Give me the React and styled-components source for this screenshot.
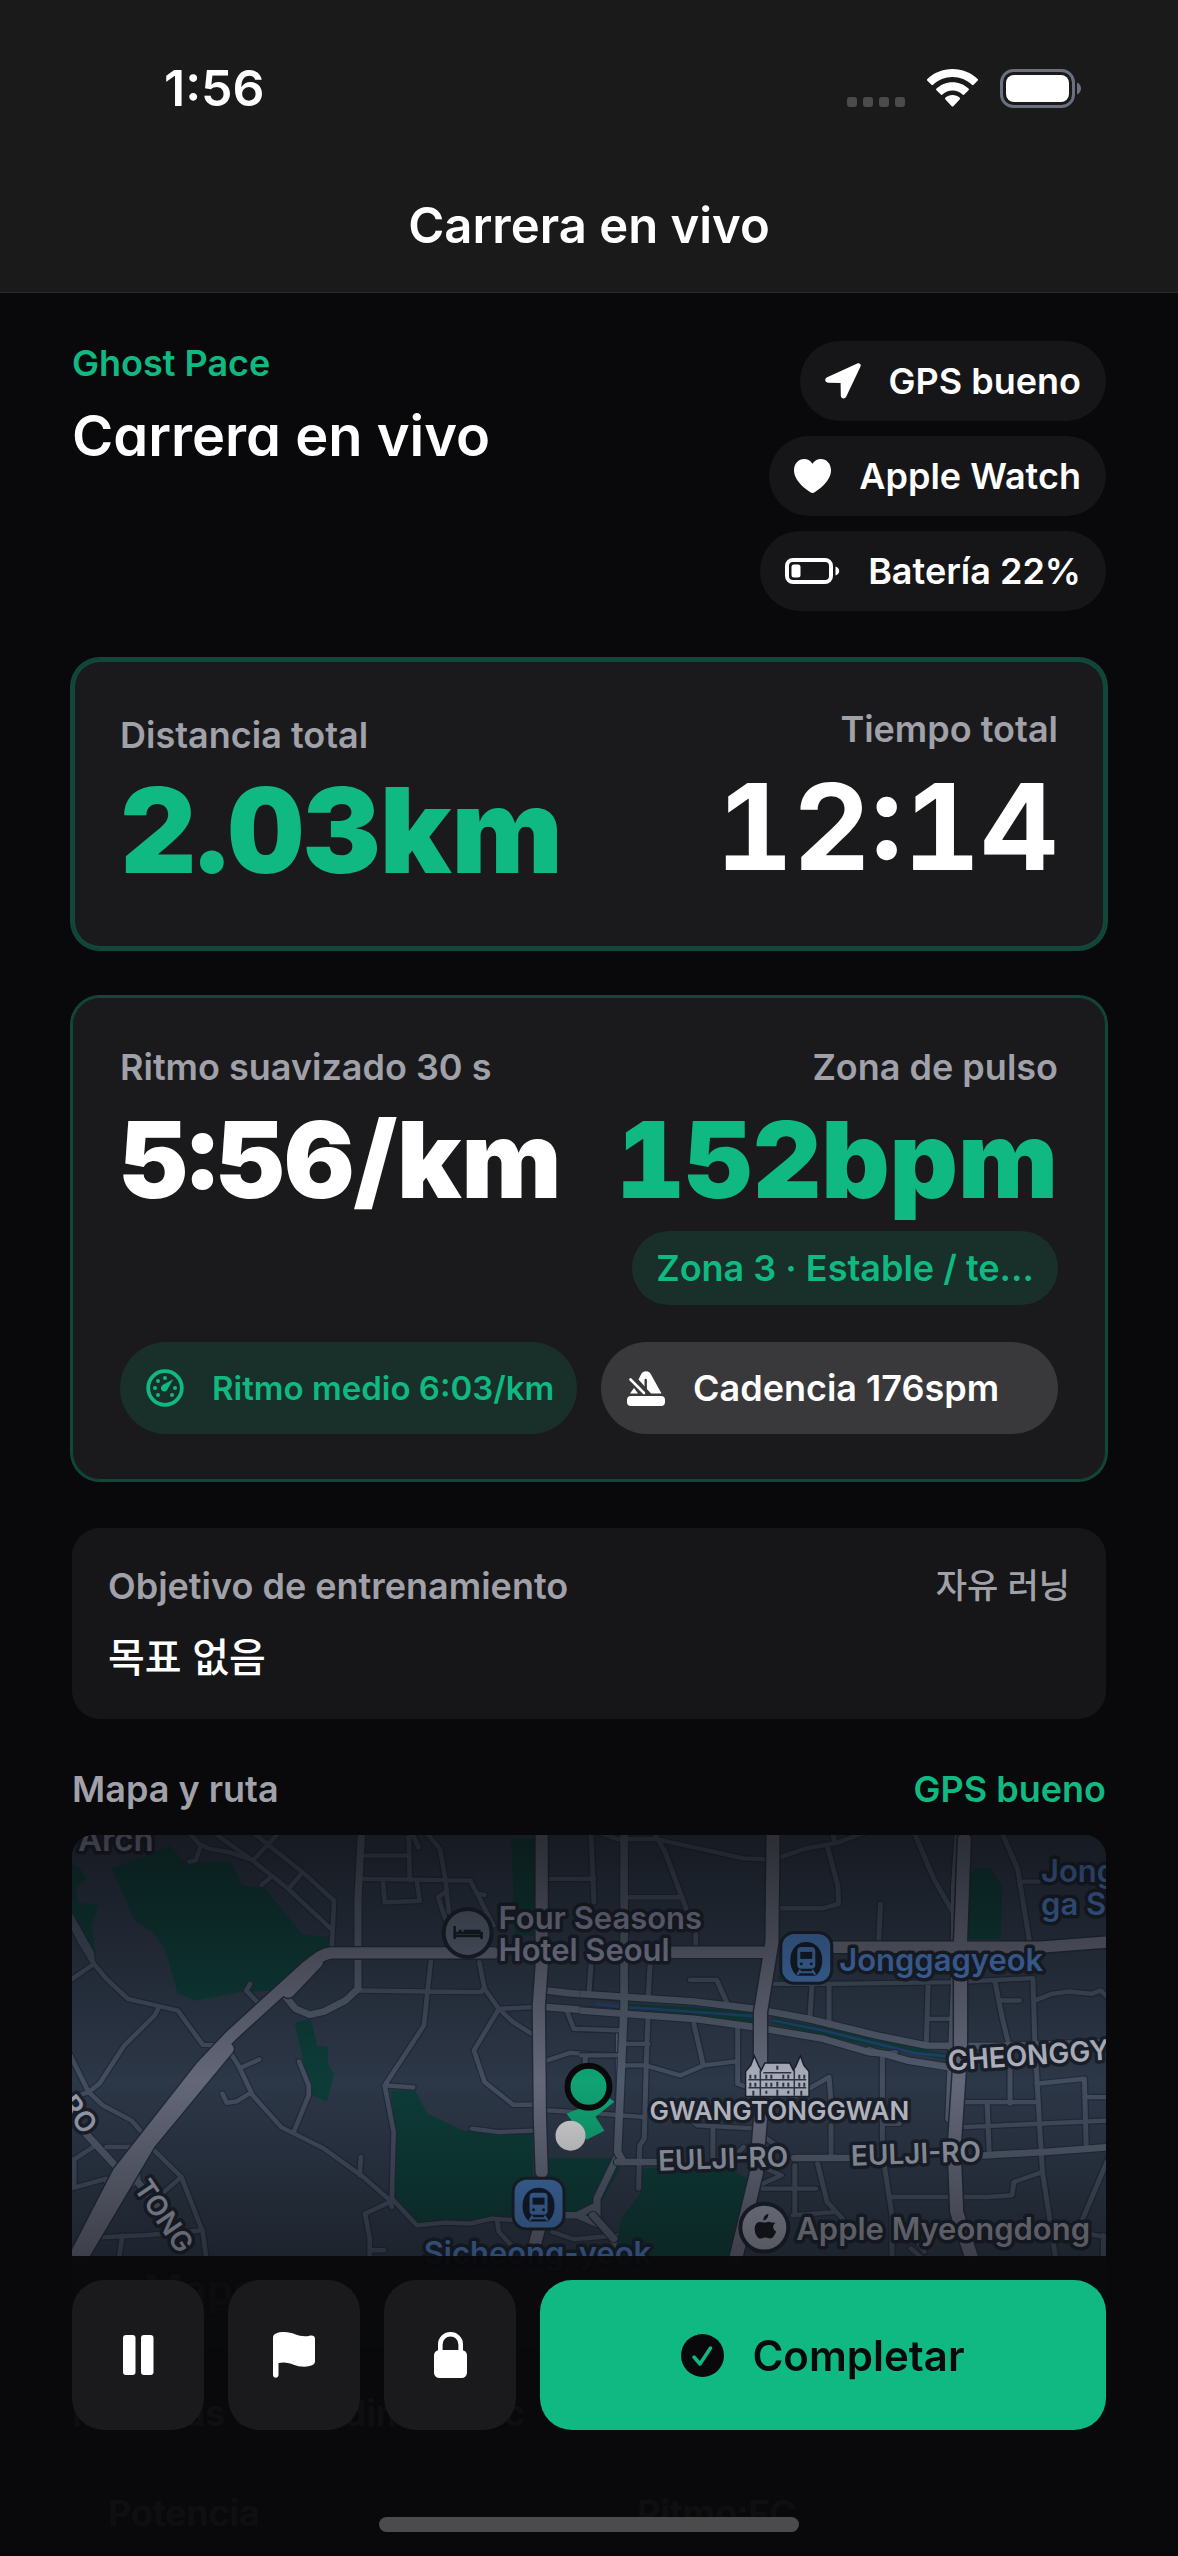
import React from 'react';
import styled, { createGlobalStyle, css } from 'styled-components';

const green = '#10b981';
const sans = "Inter, 'Noto Sans CJK KR', sans-serif";

const GlobalStyle = createGlobalStyle`
  * { box-sizing: border-box; }
  body { margin: 0; background: #09090b; color: #fff; font-family: ${sans}; -webkit-font-smoothing: antialiased; }
  h1, h2, p { margin: 0; font-weight: inherit; }
  svg { display: block; flex: none; }
`;

const Screen = styled.div`
  height: 100vh;
  display: flex;
  flex-direction: column;
  overflow: hidden;
`;

const TopBar = styled.header`
  flex: none;
  background: #1a1a1a;
  border-bottom: 1px solid #2b2b2c;
  padding: 56px 0 36px;
`;

const StatusBar = styled.div`
  display: flex;
  align-items: center;
  justify-content: space-between;
  height: 64px;
  padding: 0 96px 0 164px;
`;

const Clock = styled.time`
  font-size: 50px;
  line-height: 64px;
  font-weight: 600;
`;

const StatusIcons = styled.div`
  display: flex;
  align-items: center;
  gap: 22px;
`;

const BarTitle = styled.h1`
  margin-top: 76px;
  font-size: 49px;
  line-height: 60px;
  font-weight: 600;
  text-align: center;
`;

const Content = styled.main`
  flex: 1;
  min-height: 0;
  overflow-y: auto;
  scrollbar-width: none;
  padding: 48px 72px 320px;
  display: flex;
  flex-direction: column;
`;

const Intro = styled.section`
  display: flex;
  justify-content: space-between;
  margin-bottom: 48px;
`;

const Brand = styled.p`
  font-size: 36px;
  line-height: 44px;
  font-weight: 600;
  color: ${green};
`;

const Heading = styled.h2`
  margin-top: 13px;
  font-size: 56px;
  line-height: 76px;
  font-weight: 600;
  font-feature-settings: 'cv11', 'ss03';
`;

const Badges = styled.div`
  display: flex;
  flex-direction: column;
  align-items: flex-end;
  gap: 15px;
`;

const Badge = styled.div`
  display: flex;
  align-items: center;
  gap: 28px;
  height: 80px;
  padding: 0 25px;
  border-radius: 40px;
  background: #161618;
  font-size: 36px;
  line-height: 44px;
  font-weight: 600;
`;

const StatCard = styled.section`
  padding: 48px 48px 46px;
  border-radius: 28px;
  background: #1a1a1c;
  box-shadow: 0 0 0 2px #11483b, inset 0 0 0 ${(p) => (p.$strong ? 3 : 1)}px #11483b;
  margin-bottom: 48px;
`;

const Row = styled.div`
  display: flex;
  justify-content: space-between;
  align-items: ${(p) => p.$align || 'flex-start'};
`;

const Stat = styled.div`
  display: flex;
  flex-direction: column;
  align-items: ${(p) => (p.$end ? 'flex-end' : 'flex-start')};
`;

const Label = styled.p`
  font-size: 36px;
  line-height: 44px;
  font-weight: 600;
  color: ${(p) => (p.$accent ? green : '#a1a1aa')};
`;

const GoalType = styled(Label)`
  font-size: 34px;
  font-weight: 500;
`;

const Value = styled.p`
  font-size: ${(p) => p.$size}px;
  line-height: ${(p) => p.$line}px;
  font-weight: ${(p) => p.$weight || 900};
  font-variant-numeric: tabular-nums;
  color: ${(p) => (p.$accent ? green : '#fff')};
`;

const ZoneChip = styled.p`
  padding: 15px 24px;
  border-radius: 37px;
  background: #182f2a;
  color: ${green};
  font-size: 36px;
  line-height: 44px;
  font-weight: 600;
  white-space: nowrap;
`;

const PillRow = styled.div`
  display: grid;
  grid-template-columns: repeat(2, minmax(0, 1fr));
  gap: 24px;
  margin-top: 37px;
`;

const Pill = styled.div`
  display: flex;
  align-items: center;
  gap: 28px;
  height: 92px;
  padding: 0 26px;
  border-radius: 46px;
  white-space: nowrap;
  font-weight: 600;
  ${(p) =>
    p.$accent
      ? css`background: #182f2a; color: ${green}; font-size: 33px;`
      : css`background: #39393b; color: #fff; font-size: 36px;`}
`;

const GoalCard = styled.section`
  padding: 36px;
  border-radius: 28px;
  background: #161618;
  margin-bottom: 48px;
`;

const Goal = styled.p`
  margin-top: 25px;
  font-size: 40px;
  line-height: 50px;
  font-weight: 500;
`;

const MapFrame = styled.div`
  margin: 24px 0 43px;
  border-radius: 22px;
  overflow: hidden;
  flex: none;
  svg { width: 100%; height: auto; }
  text { font-family: ${sans}; }
`;

const Metrics = styled.section`
  display: grid;
  grid-template-columns: repeat(2, minmax(0, 1fr));
  gap: 24px;
  margin-top: 20px;
`;

const MetricCard = styled.div`
  padding: 36px;
  border-radius: 28px;
  background: #161618;
`;

const Dock = styled.footer`
  position: fixed;
  left: 0;
  right: 0;
  bottom: 0;
  height: 300px;
  padding: 24px 72px;
  background: rgba(9, 9, 11, 0.96);
  display: flex;
  flex-direction: column;
  align-items: center;
  justify-content: space-between;
`;

const Controls = styled.div`
  display: flex;
  gap: 24px;
  width: 100%;
`;

const Control = styled.button`
  flex: ${(p) => (p.$primary ? '1' : '0 0 132px')};
  display: flex;
  align-items: center;
  justify-content: center;
  gap: 28px;
  height: 150px;
  padding: 0;
  border: 0;
  border-radius: 32px;
  background: ${(p) => (p.$primary ? green : '#1a1a1c')};
  color: ${(p) => (p.$primary ? '#09090b' : '#fff')};
  font-family: inherit;
  font-size: 42px;
  font-weight: 600;
`;

const HomeIndicator = styled.div`
  width: 420px;
  height: 15px;
  border-radius: 8px;
  background: #4a4b4a;
`;

const CellDots = () => (
  <svg width="58" height="38" viewBox="0 0 58 38" fill="#4b4b4b">
    {[0, 16, 32, 48].map((x) => <rect key={x} x={x} y="28" width="10" height="10" rx="3" />)}
  </svg>
);

const Wifi = () => (
  <svg width="51" height="38" viewBox="0 0 51 38" fill="#fff">
    <path d="M25.500 0C15.700 0 6.800 3.800.4 10a1.200 1.200 0 0 0 0 1.800l4 4c.5.500 1.200.500 1.700 0C11.100 11 18 8 25.500 8s14.400 3 19.400 7.800c.5.500 1.200.500 1.700 0l4-4a1.200 1.200 0 0 0 0-1.800C44.200 3.800 35.300 0 25.500 0z" />
    <path d="M25.500 13.200c-6.200 0-11.800 2.400-16 6.300a1.200 1.200 0 0 0 0 1.800l4.300 4.200c.5.500 1.200.500 1.700 0a14.500 14.500 0 0 1 20 0c.5.500 1.200.500 1.700 0l4.300-4.200a1.200 1.200 0 0 0 0-1.800c-4.200-3.900-9.800-6.300-16-6.300z" />
    <path d="M25.500 26c-2.700 0-5.200 1-7 2.600a1.200 1.200 0 0 0 0 1.800l6.200 6.800c.5.500 1.200.500 1.700 0l6.200-6.800a1.200 1.200 0 0 0 0-1.800c-1.900-1.600-4.400-2.600-7.100-2.600z" />
  </svg>
);

const PhoneBattery = () => (
  <svg width="82" height="39" viewBox="0 0 82 39">
    <rect x="1.500" y="1.500" width="72" height="36" rx="12" fill="none" stroke="#6b7080" strokeWidth="3" />
    <rect x="6" y="6" width="63" height="27" rx="8" fill="#fff" />
    <path d="M77 13.500c2.600 1 4 3.400 4 6s-1.400 5-4 6z" fill="#6b7080" />
  </svg>
);

const Arrow = () => (
  <svg width="36" height="36" viewBox="0 0 36 36" fill="#fff">
    <path d="M32.300.4 2.200 14.200C-.7 15.600-.3 19.600 3 19.700l12.600.2.200 12.700c.1 3.300 4.100 4 5.500 1L35.500 3.500C36.400 1.300 34.500-.6 32.300.4z" />
  </svg>
);

const Heart = () => (
  <svg width="37" height="34" viewBox="0 0 37 34" fill="#fff">
    <path d="M18.500 34c-.8 0-1.700-.5-2.500-1C6 26.500 0 19 0 11.300 0 4.700 4.500 0 10.200 0c3.500 0 6.500 1.800 8.300 4.800C20.300 1.800 23.300 0 26.800 0 32.500 0 37 4.700 37 11.300 37 19 31 26.500 21 33c-.8.500-1.700 1-2.500 1z" />
  </svg>
);

const LowBattery = () => (
  <svg width="55" height="26" viewBox="0 0 55 26">
    <rect x="2" y="2" width="44" height="22" rx="6" fill="none" stroke="#fff" strokeWidth="4" />
    <rect x="6.500" y="6.500" width="9" height="13" rx="2.500" fill="#fff" />
    <path d="M50.500 8.500c2.300.7 3.700 2.400 3.700 4.500s-1.400 3.800-3.700 4.500z" fill="#fff" />
  </svg>
);

const Gauge = () => (
  <svg width="38" height="38" viewBox="0 0 38 38">
    <circle cx="19" cy="19" r="16.800" fill="none" stroke={green} strokeWidth="3.800" />
    <g fill={green}>
      <path d="M27.300 10.300 17 15.800c-2.600 1.800-2.400 4.600-.9 6 1.500 1.300 4 1.200 5.300-1.300z" />
      <circle cx="19" cy="9" r="2" /><circle cx="12" cy="12" r="2" />
      <circle cx="9" cy="19" r="2" /><circle cx="29" cy="19" r="2" />
      <circle cx="12" cy="26" r="2" /><circle cx="26" cy="26" r="2" />
    </g>
  </svg>
);

const Metronome = () => (
  <svg width="38" height="35" viewBox="0 0 38 35" fill="#fff">
    <rect x="0" y="25" width="38" height="10" rx="4" />
    <path d="M7 17 3 22.500h8z" />
    <path d="M11.500 8.500 14 3.500C16-.9 22-.9 24 3.500L34.500 22.500H24z" />
    <path d="M3.500 8.500 17 22" stroke="#fff" strokeWidth="2.600" strokeLinecap="round" />
    <path d="M18.700 9v9" stroke="#39393b" strokeWidth="2.400" strokeLinecap="round" />
  </svg>
);

const Pause = () => (
  <svg width="31" height="40" viewBox="0 0 31 40" fill="#fff">
    <rect width="12.500" height="40" rx="3" /><rect x="18" width="12.500" height="40" rx="3" />
  </svg>
);

const Flag = () => (
  <svg width="42" height="46" viewBox="0 0 42 46" fill="#fff">
    <path d="M0 6c0-2.200.8-3.500 3-4.500C5.400.4 7.800 0 11 0c9 0 13.500 4.300 21 4.300 3 0 4.700-.8 6.500-.8 2 0 3.500 1.200 3.500 3.400V29c0 2.200-.8 3.300-3 4.300-2.200.9-4.500 1.400-7.500 1.400-8.700 0-13.300-4.300-21-4.300-2 0-3.600.2-5 .7V43c0 3.500-5.500 3.500-5.500 0z" />
  </svg>
);

const Lock = () => (
  <svg width="33" height="46" viewBox="0 0 33 46">
    <rect y="18" width="33" height="28" rx="5.500" fill="#fff" />
    <path d="M6.300 20v-7.500C6.300 6.500 11 2.300 16.500 2.300s10.200 4.200 10.200 10.200V20" fill="none" stroke="#fff" strokeWidth="4.600" />
  </svg>
);

const CheckCircle = () => (
  <svg width="43" height="43" viewBox="0 0 43 43">
    <circle cx="21.500" cy="21.500" r="21.500" fill="#09090b" />
    <path d="m13 23 6 7 10.500-16" fill="none" stroke={green} strokeWidth="3.500" strokeLinecap="round" strokeLinejoin="round" />
  </svg>
);

/* Street geometry, digitised on two overlapping sheets: west and east. */
const WEST = {
  parks: [
    'M145 150 310 80 345 130 480 130 510 200 570 205 680 345 755 355 755 380 720 400 600 515 500 520 380 545 330 525 295 395 265 345 205 300 180 230z',
    'M0 130 50 140 75 180 45 205 50 250 108 260 88 320 100 400 90 400 35 310 0 300z',
    'M1265 60H1335V350H1275z',
    'M658 612 703 600 720 680 750 685 752 740 768 765 748 848 705 830 682 725z',
    'M927 815H995L1030 885 1130 935 1240 945H1325V1075H1530L1520 1130 1480 1170 1350 1200 1200 1195 1100 1215 995 1215 940 1140 940 930z',
    'M1365 1018H1568V1050L1510 1165H1365z',
  ],
  minor: [
    'M360 40 390 75 420 90 475 100 530 120M395 80 380 125 362 128',
    'M430 40 540 125 640 210 760 330M540 125 610 45M540 40 680 160 768 245 762 380M680 160 640 210M590 175 565 198',
    'M845 110H970M978 60 980 185M845 180 1000 182 1150 185 1215 320M905 185 910 250 1008 246 1000 185M975 55 990 50 1005 85M1030 45 1065 90 1080 180 1090 280M1085 215 1060 235 1080 300M1190 228 1175 225',
    'M1365 180H1490M1488 40 1497 250M1490 440 1485 520',
    'M0 250 60 375 95 435 130 480 190 540 270 560 330 575 400 678 450 680M95 435 0 505M92 430 88 400 30 290',
    'M275 570 265 590 180 680 110 795 80 820 50 832M20 690 80 820 120 860 200 905 245 960',
    'M555 552 522 515 533 495M470 690 500 740 540 830 620 925 740 990 850 1075 925 1145 930 1165M510 745 558 722M530 825 495 848 467 852 455 825M670 728 697 800 697 830 655 940M843 1015 840 1070',
    'M838 515 1030 518 1180 520 1190 505M1040 420 1030 518 1020 620 910 800 935 940 930 1140M910 800 990 806M1175 430 1190 510 1230 570 1270 610 1330 650M1230 570 1160 695 1190 790 1270 858H1325M1230 570 1325 565M1155 930 1230 940 1325 936',
    'M930 1140 1000 1220 1080 1212 1150 1215 1210 1200 1280 1205M925 1150 855 1185 868 1260 868 1320M868 1295H908M1225 1205 1230 1240 1265 1280M1380 1240 1440 1262 1568 1250',
    'M240 970 340 1075 400 1240 410 1320M340 1075 275 1135M0 1050 100 980M30 1110 130 1080M40 1020V1100M130 985H210L220 1080 180 1120 130 1090M80 1258 240 1250 400 1235M175 1250 165 1320',
    'M1365 725 1430 702 1568 712M1470 705V740M1420 575 1440 630 1568 635M1365 875 1568 888',
  ],
  medium: [
    'M845 40 835 240 835 510 800 545 740 578 700 588 660 570 630 530',
    'M1365 515 1420 522 1568 535M1365 565 1568 582',
    'M60 930 180 1070M180 1040 330 1240',
    'M1568 640 1568 1000 1550 1040 1505 1140 1505 1200 1568 1290M1365 1190H1450L1505 1160M1450 1190 1505 1215',
  ],
  major: [
    'M1215 402H760C735 405 720 420 690 445L480 650 400 740 165 1060 35 1330M720 430 640 520M470 690 250 975 60 1320',
    'M1350 40V440L1342 560 1345 900 1350 1060M1350 1200 1320 1320',
  ],
};

const EAST = {
  parks: [
    'M1018 180 1040 148H1080L1110 200 1105 360H1020z',
    'M120 555 300 565 460 580V610L300 590 125 570z',
    'M505 595 640 625 800 668 960 705V722L800 690 640 650 505 615z',
    'M165 1048H390L440 1080 400 1320H90L110 1200 165 1115z',
    'M520 470H560V485H520z',
  ],
  water: ['M45 555 120 565 250 575 455 592', 'M508 605 640 635 800 680 880 703 960 712'],
  minor: [
    'M30 40 38 250M0 180H38M117 235H265M195 40 225 100 280 270M305 345V375M515 268H640L680 255 678 200 650 80M500 125 590 90 680 70 750 40M665 45 670 70M785 372 790 255M880 45 930 180 985 290M1110 45 1150 150 1180 360M1155 188H1205',
    'M60 45 100 60H200L320 90 430 118 505 122',
    'M30 440 25 520M185 440 180 540M290 483H360L390 560M117 675H180M180 590 175 740 170 960 158 980 155 1110M300 615 325 740M117 740H175L265 770 325 740 410 728M415 625V795L440 805M510 495H660M610 500 605 590M655 495V620M660 495 985 490M915 500 910 675M915 600H975M985 490 1190 478 1195 670 1208 930 1215 1060 1250 1320M1090 485 1110 600 1125 670M1105 545H1155M1195 545 1240 525 1285 518 1345 525 1368 515 1395 545',
    'M0 630 115 635M795 710 795 970M795 705 760 690M795 705 830 700M540 850 655 775 660 850M660 920V1010M350 930V1020M290 900 310 920 470 930M0 710H110M15 710V740M0 880 170 895M480 950 540 1000M800 915H840',
    'M1130 690V855M1010 850H1195M1070 855 1075 995M1010 925 1205 915 1395 905M1200 795 1325 780 1330 990M1325 835H1395',
    'M625 1035 650 1150 690 1200 700 1250M480 1110H620M565 1040V1190M560 1190 670 1180M800 1040 820 1190 820 1320M820 1135H1070L1135 1130 1140 1090 1215 1060M1395 1000 1310 1230M1310 1240 1400 1260M1375 1250V1320M870 1290 900 1320M905 1300 890 1275',
    'M430 985 410 1010 530 1070 470 1100',
  ],
  medium: [
    'M117 40 117 560 100 1000 115 1030M35 1190 90 1260',
    'M0 525 300 548 460 570 600 600 780 650 910 680 1100 682 1395 670M0 575 300 600 460 625 640 660 760 700 800 705 860 725 970 745',
    'M100 1030H200M565 1018H705M1060 1010 1220 1000 1395 985',
    'M995 40 985 200 985 490 970 900',
  ],
  major: [
    'M508 40 505 370 475 580 475 740M475 900 470 970M465 1060 410 1320',
    'M245 400H500M670 385H1210L1400 368',
    'M1010 60 1000 370 1000 700 985 960M985 1040 990 1180 1030 1320',
  ],
};

const Sheet = ({ data, transform }) => (
  <g transform={transform}>
    {data.parks.map((d) => <path key={d} d={d} fill="#0d3c38" />)}
    <g fill="none" strokeLinejoin="round" strokeLinecap="round">
      {(data.water || []).map((d) => <path key={d} d={d} stroke="#22406e" strokeWidth="8" />)}
      <g stroke="#222b39" strokeWidth="20">{data.minor.map((d) => <path key={d} d={d} />)}</g>
      <g stroke="#222b39" strokeWidth="26">{data.medium.map((d) => <path key={d} d={d} />)}</g>
      <g stroke="#434d5f" strokeWidth="13">{data.minor.map((d) => <path key={d} d={d} />)}</g>
      <g stroke="#515a6b" strokeWidth="20">{data.medium.map((d) => <path key={d} d={d} />)}</g>
      <g stroke="#222b39" strokeWidth="42">{data.major.map((d) => <path key={d} d={d} />)}</g>
      <g stroke="#636778" strokeWidth="34">{data.major.map((d) => <path key={d} d={d} />)}</g>
    </g>
  </g>
);

const Station = ({ x, y }) => (
  <g transform={`translate(${x} ${y})`}>
    <rect x="-3" y="-3" width="54" height="54" rx="15" fill="#1a202b" />
    <rect width="48" height="48" rx="12" fill="#4170ad" />
    <path d="M8 26C8 2 40 2 40 26c0 8-3 13-7 16H15c-4-3-7-8-7-16z" fill="#131b2a" />
    <rect x="15" y="13" width="18" height="22" rx="4" fill="#4170ad" />
    <rect x="18" y="18" width="12" height="7" fill="#131b2a" />
    <circle cx="19" cy="30" r="1.500" fill="#131b2a" /><circle cx="29" cy="30" r="1.500" fill="#131b2a" />
    <path d="m18 36-3 5M30 36l3 5M17 38.500h14" stroke="#4170ad" strokeWidth="2" />
  </g>
);

const MapLabel = ({ x, y, size = 31, fill = '#8688a0', turn = 0, weight = 600, children }) => (
  <text
    transform={`translate(${x} ${y}) rotate(${turn})`}
    fontSize={size}
    fontWeight={weight}
    fill={fill}
    stroke="#1a202b"
    strokeWidth="7"
    strokeLinejoin="round"
    paintOrder="stroke"
  >
    {children}
  </text>
);

const Hall = () => (
  <g transform="translate(675 223)">
    <path d="M0 38V14L5 8 8 0l4 9 3 5 4-8h24l4 8 3-5 4-9 3 8 5 6v24z" fill="#a9adba" stroke="#1a202b" strokeWidth="3" paintOrder="stroke" />
    <path d="M17 15h28M2 22h58M2 30h58M14 12v26M48 12v26" stroke="#2b3444" strokeWidth="1.500" />
    <path d="M4 17v4M9 17v4M20 17v4M25 17v4M31 8v4M37 17v4M42 17v4M53 17v4M58 17v4M4 25v4M9 25v4M20 25v4M25 25v4M31 24v5M37 25v4M42 25v4M53 25v4M58 25v4M7 33v5M20 33v3M31 32v6M42 33v3M55 33v5" stroke="#2b3444" strokeWidth="2" />
  </g>
);

const RouteMap = () => (
  <svg viewBox="0 0 1035 513" role="img" aria-label="Mapa y ruta">
    <defs>
      <linearGradient id="shade" x1="0" y1="0" x2="0" y2="1">
        <stop offset="0" stopColor="#09090b" stopOpacity="0.62" />
        <stop offset="0.48" stopColor="#09090b" stopOpacity="0" />
        <stop offset="1" stopColor="#09090b" stopOpacity="0.64" />
      </linearGradient>
      <clipPath id="westHalf"><rect width="548" height="513" /></clipPath>
      <clipPath id="eastHalf"><rect x="508" width="527" height="513" /></clipPath>
    </defs>
    <rect width="1035" height="513" fill="#2c3747" />
    <g clipPath="url(#westHalf)"><Sheet data={WEST} transform="translate(-12 -16) scale(0.35714 0.33333)" /></g>
    <g clipPath="url(#eastHalf)"><Sheet data={EAST} transform="translate(508 -16) scale(0.38139 0.33333)" /></g>
    <MapLabel x={6} y={16} size={33}>Arch</MapLabel>
    <circle cx="396" cy="98" r="24" fill="#596275" stroke="#1a202b" strokeWidth="4" />
    <path d="M383 91v13M383 101h27M410 104v-6h-27M387 96h3M392 96h17" stroke="#161b24" strokeWidth="2.500" fill="none" />
    <MapLabel x={427} y={94}>Four Seasons</MapLabel>
    <MapLabel x={427} y={126}>Hotel Seoul</MapLabel>
    <Station x={711} y={99} />
    <MapLabel x={768} y={136} fill="#4978bc">Jonggagyeok</MapLabel>
    <MapLabel x={970} y={47} fill="#4978bc">Jong</MapLabel>
    <MapLabel x={970} y={80} fill="#4978bc">ga S</MapLabel>
    <MapLabel x={877} y={236} size={28} fill="#b4b7c3" turn={-4}>CHEONGGY</MapLabel>
    <MapLabel x={587} y={336} size={28} fill="#9aa0af" turn={-2}>EULJI-RO</MapLabel>
    <MapLabel x={780} y={331} size={28} fill="#9aa0af" turn={-2}>EULJI-RO</MapLabel>
    <MapLabel x={61} y={353} size={28} fill="#9aa0af" turn={56}>TONG</MapLabel>
    <MapLabel x={-13} y={270} size={28} fill="#9aa0af" turn={52}>RO</MapLabel>
    <Hall />
    <MapLabel x={578} y={285} size={26} fill="#bcbfca">GWANGTONGGWAN</MapLabel>
    <circle cx="693" cy="393" r="24" fill="#8b8f9d" stroke="#1a202b" strokeWidth="4" />
    <path d="M700 388c-3-2-5 0-7 0s-5-2-8 1c-4 5 0 15 4 15 2 0 3-1 5-1s3 1 5 1c3 0 5-5 6-7-4-2-4-7-1-8-1-1-2-1-4-1zM692 386c0-4 2-6 5-7 0 4-2 6-5 7z" fill="#14171e" />
    <MapLabel x={725} y={405} fill="#8b8d99">Apple Myeongdong</MapLabel>
    <Station x={443} y={345} />
    <MapLabel x={352} y={429} fill="#4978bc">Sicheong-yeok</MapLabel>
    <MapLabel x={72} y={470} size={42} fill="#b4b7c3">Maps</MapLabel>
    <path d="M536 262 543 267 524 282 533 296 515 305 495 279z" fill="#10a373" />
    <circle cx="499" cy="301" r="15" fill="#d2d2d4" />
    <circle cx="517" cy="252" r="21" fill="#10a373" stroke="#09090b" strokeWidth="6" />
    <rect width="1035" height="513" fill="url(#shade)" />
  </svg>
);

export default function App() {
  return (
    <Screen>
      <GlobalStyle />
      <TopBar>
        <StatusBar>
          <Clock>1:56</Clock>
          <StatusIcons><CellDots /><Wifi /><PhoneBattery /></StatusIcons>
        </StatusBar>
        <BarTitle>Carrera en vivo</BarTitle>
      </TopBar>

      <Content>
        <Intro>
          <div>
            <Brand>Ghost Pace</Brand>
            <Heading>Carrera en vivo</Heading>
          </div>
          <Badges>
            <Badge><Arrow />GPS bueno</Badge>
            <Badge><Heart />Apple Watch</Badge>
            <Badge><LowBattery />Batería 22%</Badge>
          </Badges>
        </Intro>

        <StatCard $strong>
          <Row $align="flex-end">
            <Stat>
              <Label>Distancia total</Label>
              <Value $accent $size={118} $line={146}>2.03km</Value>
            </Stat>
            <Stat $end>
              <Label>Tiempo total</Label>
              <Value $size={120} $line={152} $weight={700}>12:14</Value>
            </Stat>
          </Row>
        </StatCard>

        <StatCard>
          <Row>
            <Stat>
              <Label>Ritmo suavizado 30 s</Label>
              <Value $size={106} $line={142}>5:56/km</Value>
            </Stat>
            <Stat $end>
              <Label>Zona de pulso</Label>
              <Value $accent $size={106} $line={142}>152bpm</Value>
              <ZoneChip>Zona 3 · Estable / te…</ZoneChip>
            </Stat>
          </Row>
          <PillRow>
            <Pill $accent><Gauge />Ritmo medio 6:03/km</Pill>
            <Pill><Metronome />Cadencia 176spm</Pill>
          </PillRow>
        </StatCard>

        <GoalCard>
          <Row>
            <Label>Objetivo de entrenamiento</Label>
            <GoalType>자유 러닝</GoalType>
          </Row>
          <Goal>목표 없음</Goal>
        </GoalCard>

        <Row>
          <Label>Mapa y ruta</Label>
          <Label $accent>GPS bueno</Label>
        </Row>
        <MapFrame><RouteMap /></MapFrame>

        <Label>Métricas de rendimiento c</Label>
        <Metrics>
          <MetricCard><Label>Potencia</Label></MetricCard>
          <MetricCard><Label>Ritmo:FC</Label></MetricCard>
        </Metrics>
      </Content>

      <Dock>
        <Controls>
          <Control aria-label="Pausar"><Pause /></Control>
          <Control aria-label="Marcar vuelta"><Flag /></Control>
          <Control aria-label="Bloquear"><Lock /></Control>
          <Control $primary><CheckCircle />Completar</Control>
        </Controls>
        <HomeIndicator />
      </Dock>
    </Screen>
  );
}
